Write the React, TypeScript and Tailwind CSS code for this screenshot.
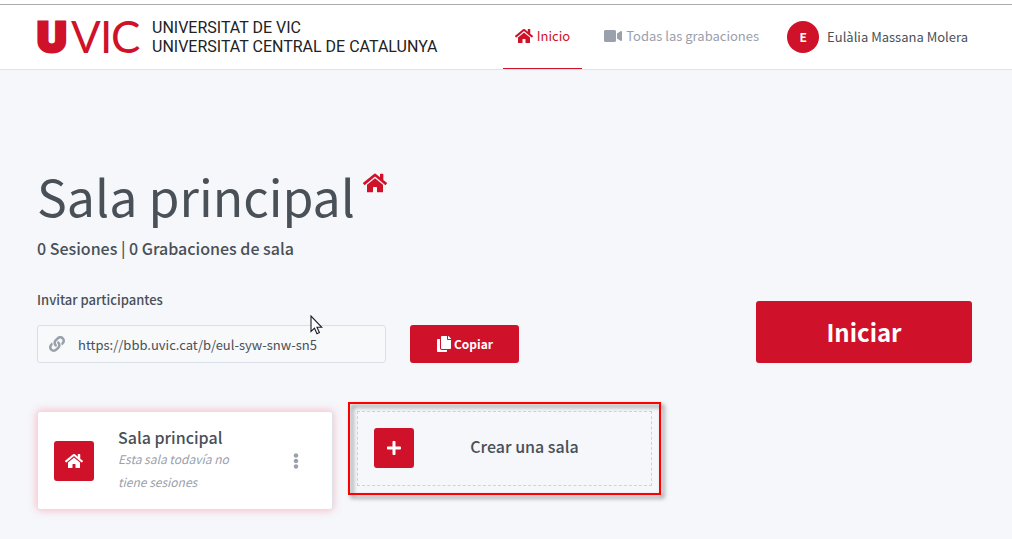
import React, { useState } from 'react';
import { FaCopy, FaEllipsisV, FaHome, FaLink, FaPlus, FaVideo } from 'react-icons/fa';

const Logo = () => (
  <a href="#" aria-label="UVic" className="flex items-center gap-2.5 text-[#222]">
    <svg width="105" height="60" viewBox="0 0 105 60" fill="#cf1129" className="overflow-visible font-['Lato',sans-serif] text-[44px]">
      <text x="0" y="45" fontWeight="900" stroke="#cf1129" strokeWidth="3" className="font-['Inter',sans-serif] text-[41px]">
        U
      </text>
      <text x="34" y="46">V</text>
      <text x="63" y="46">I</text>
      <text x="74" y="46">C</text>
    </svg>
    <span className="whitespace-nowrap font-['Roboto',sans-serif] text-[16px] leading-[19px]">
      UNIVERSITAT DE VIC
      <br />
      UNIVERSITAT CENTRAL DE CATALUNYA
    </span>
  </a>
);

const Header = () => (
  <header className="flex h-[66px] items-stretch justify-between border-t border-b border-t-[#ababab] border-b-[#dfe3e9] bg-white pr-11 pl-[37px]">
    <Logo />
    <div className="flex items-stretch">
      <nav className="flex gap-2.5">
        <a href="#" className="flex items-center gap-1 border-b border-[#cf1129] px-3 pb-0.5 text-[#cf1129]">
          <FaHome className="h-4 w-[18px]" />
          Inicio
        </a>
        <a href="#" className="flex items-center gap-1 px-3 pb-0.5 text-[#9aa0ac]">
          <FaVideo className="h-4 w-[18px]" />
          Todas las grabaciones
        </a>
      </nav>
      <button type="button" className="ml-4 flex items-center gap-2">
        <span className="flex h-8 w-8 items-center justify-center rounded-full bg-[#cf1129] text-[12px] font-bold text-white">
          E
        </span>
        Eulàlia Massana Molera
      </button>
    </div>
  </header>
);

const Cursor = () => (
  <svg width="13" height="20" viewBox="0 0 13 20" className="pointer-events-none absolute -top-2.5 left-[273px]">
    <path
      d="M1 1 V16.5 L4.5 13.2 L7 18.7 L9.4 17.6 L7 12.3 H11.8 Z"
      fill="#fff"
      stroke="#1b1b2b"
      strokeWidth="1.1"
    />
  </svg>
);

const InviteBar = () => {
  const [url] = useState('https://bbb.uvic.cat/b/eul-syw-snw-sn5');

  return (
    <div className="flex items-end justify-between gap-6">
      <div className="max-w-[482px] flex-1">
        <label htmlFor="invite-url" className="mb-[15px] block leading-[20px] font-medium">
          Invitar participantes
        </label>
        <div className="flex gap-6">
          <div className="relative flex-1">
            <FaLink className="absolute top-[11px] left-3 h-4 w-4 text-[#9aa0ac]" />
            <input
              id="invite-url"
              type="text"
              readOnly
              value={url}
              className="h-[38px] w-full rounded-[3px] border border-[#d9dfe8] bg-[#f8f9fa] pr-3 pl-10 outline-none"
            />
            <Cursor />
          </div>
          <button
            type="button"
            onClick={() => navigator.clipboard.writeText(url)}
            className="flex h-[38px] w-[109px] items-center justify-center gap-0.5 rounded-[3px] bg-[#cf1129] text-[12px] font-bold text-white"
          >
            <FaCopy className="h-4 w-4" />
            Copiar
          </button>
        </div>
      </div>
      <button
        type="button"
        className="h-[62px] w-[216px] rounded-[3px] bg-[#cf1129] text-[24px] leading-[30px] font-bold text-white"
      >
        Iniciar
      </button>
    </div>
  );
};

const RoomCard = () => (
  <article className="flex items-center rounded-[3px] border border-[#dde3ec] bg-white p-4 shadow-[0_0_8px_rgba(255,60,80,0.35)]">
    <span className="flex h-10 w-10 shrink-0 items-center justify-center rounded-[3px] bg-[#cf1129] text-white">
      <FaHome className="h-4 w-[18px]" />
    </span>
    <div className="ml-6 flex-1">
      <h4 className="text-[16px] leading-[19px] font-medium">Sala principal</h4>
      <p className="w-[130px] text-[12px] leading-[23px] text-[#9aa0ac] italic">Esta sala todavía no tiene sesiones</p>
    </div>
    <button type="button" aria-label="Opciones" className="mr-3 text-[#9aa0ac]">
      <FaEllipsisV className="h-4 w-4" />
    </button>
  </article>
);

const CreateRoom = () => (
  <div className="relative self-start">
    <button type="button" className="flex h-[75px] w-full items-center border border-dashed border-[#cfd3d8] px-4 pb-0.5">
      <span className="flex h-10 w-10 shrink-0 items-center justify-center rounded-[3px] bg-[#cf1129] text-white">
        <FaPlus className="h-4 w-4" />
      </span>
      <span className="flex-1 pb-1 text-center text-[16px] font-medium">Crear una sala</span>
    </button>
    <div className="pointer-events-none absolute -inset-[9px] border-2 border-[#fe0000] drop-shadow-[3px_3px_2px_rgba(0,0,0,0.5)]" />
  </div>
);

const App = () => (
  <div className="min-h-screen bg-[#f5f7fb] pt-1 font-['Noto_Sans_CJK_SC',sans-serif] text-[13px] leading-[22px] text-[#495057] [box-shadow:inset_0_4px_0_#fff]">
    <Header />
    <main className="pt-[94px] pr-10 pb-7 pl-[37px]">
      <h1 className="flex items-start gap-2 text-[50px] leading-[62px]">
        Sala principal
        <FaHome className="mt-2 h-[22px] w-6 text-[#cf1129]" />
      </h1>
      <h4 className="mt-2.5 mb-[30px] text-[16px] leading-[24px] font-medium">0 Sesiones | 0 Grabaciones de sala</h4>
      <InviteBar />
      <section className="mt-12 grid grid-cols-3 gap-6">
        <RoomCard />
        <CreateRoom />
      </section>
    </main>
  </div>
);

export default App;
